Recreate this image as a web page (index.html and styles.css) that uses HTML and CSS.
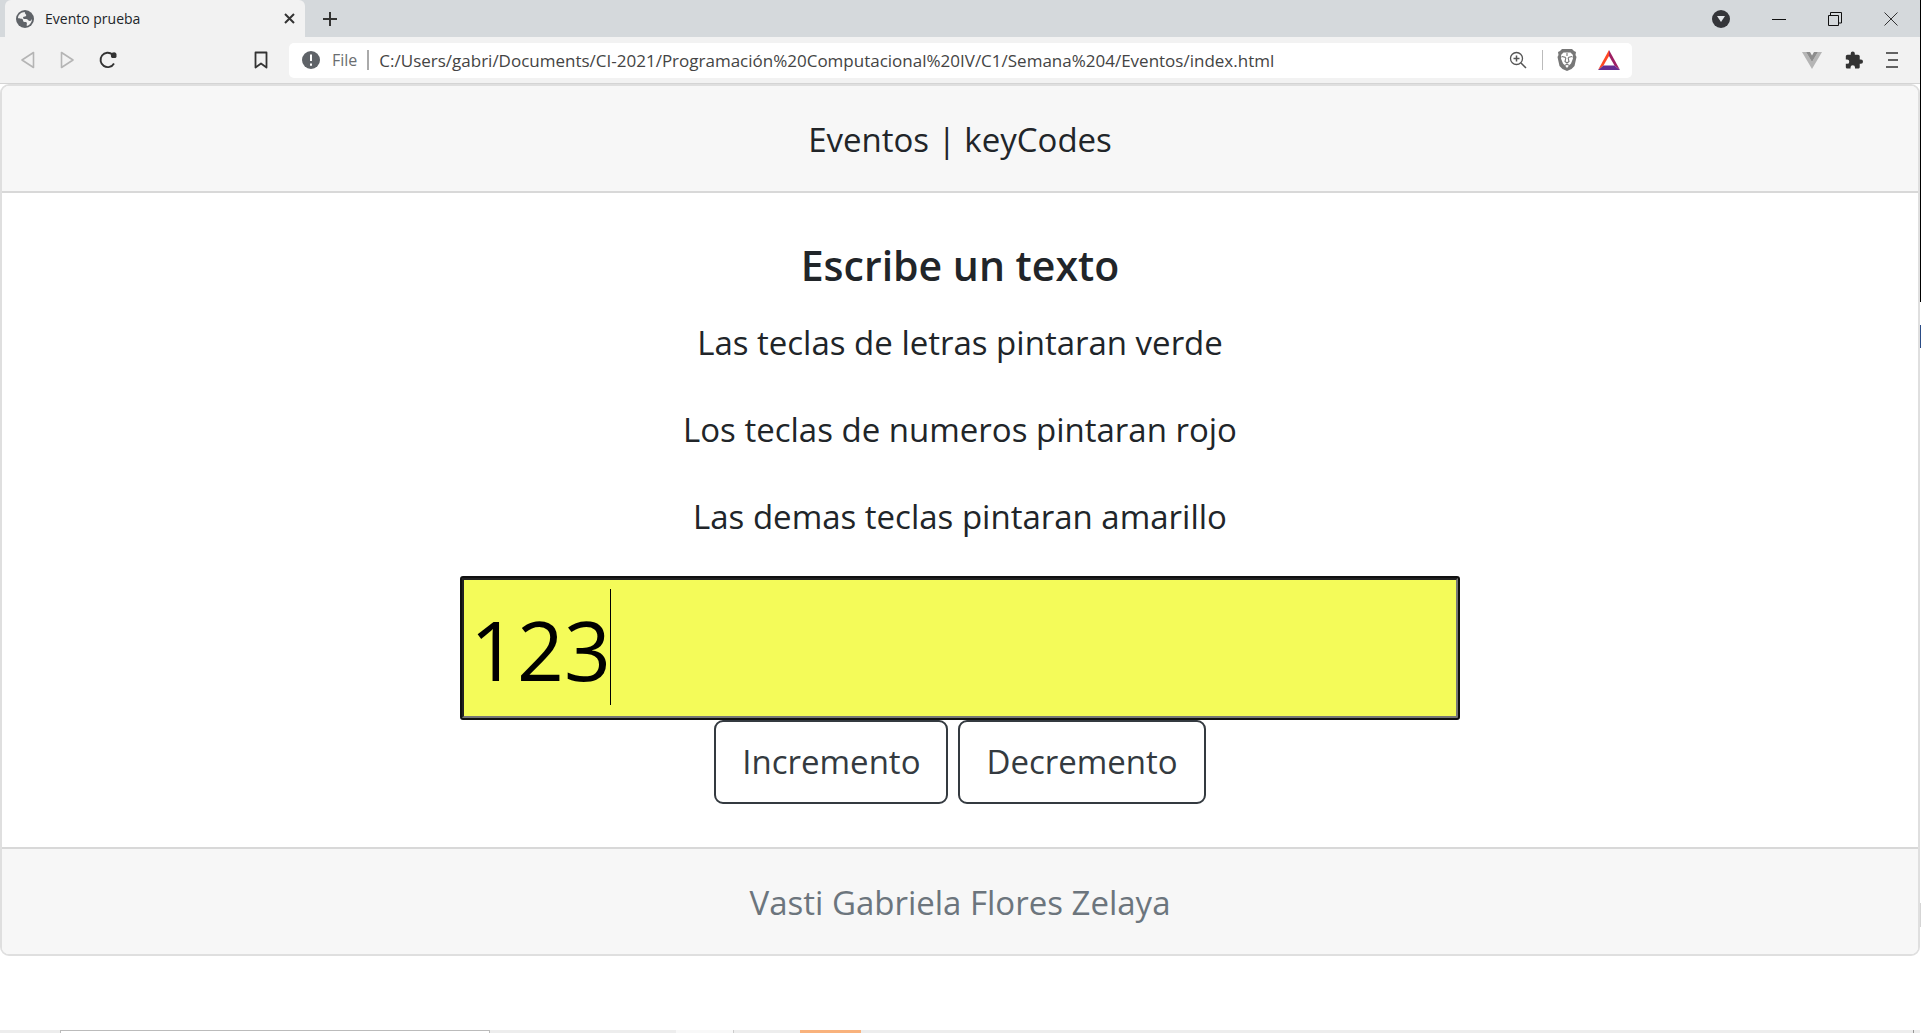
FILE: index.html
```html
<!DOCTYPE html>
<html lang="es">
<head>
<meta charset="utf-8">
<title>Evento prueba</title>
<link rel="stylesheet" href="styles.css">
</head>
<body>
<div class="window">
  <header class="tabs">
    <div class="tab">
      <svg class="icon" width="18" height="18" viewBox="0 0 18 18"><circle cx="9" cy="9" r="9" fill="#5f6368"/><path d="M9 2c-1 2 2 2 1 4-1 1-3 0-3 2 0 1 2 1 3 1 2 0 2 2 4 2 1 0 1-1 2-2 0 3-2 6-5 7-1-1 1-3-1-4-2 0-3 0-3-2S3 9 2 8c0-3 3-6 7-6z" fill="#f2f2f2"/></svg>
      <span class="tab-title">Evento prueba</span>
      <button class="icon-btn" aria-label="Cerrar pestaña"><svg width="11" height="11" viewBox="0 0 11 11"><path d="M1 1l9 9M10 1l-9 9" stroke="#333" stroke-width="2"/></svg></button>
    </div>
    <button class="icon-btn new-tab" aria-label="Nueva pestaña"><svg width="16" height="16" viewBox="0 0 16 16"><path d="M8 1v14M1 8h14" stroke="#333" stroke-width="2"/></svg></button>
    <div class="window-controls">
      <button class="icon-btn" aria-label="Buscar pestañas"><svg width="18" height="18" viewBox="0 0 18 18"><circle cx="9" cy="9" r="9" fill="#35363a"/><path d="M5 6h8l-4 6z" fill="#e4e7ea"/></svg></button>
      <button class="icon-btn" aria-label="Minimizar"><svg width="14" height="14" viewBox="0 0 14 14"><path d="M0 7.5h14" stroke="#111"/></svg></button>
      <button class="icon-btn" aria-label="Restaurar"><svg width="14" height="14" viewBox="0 0 14 14"><path d="M.5 3.500h10v10H.5zM2.500 3V.5h11v10.500H11" fill="none" stroke="#111"/></svg></button>
      <button class="icon-btn" aria-label="Cerrar"><svg width="14" height="14" viewBox="0 0 14 14"><path d="M.5.5l13 13M13.500.5l-13 13" stroke="#333"/></svg></button>
    </div>
  </header>
  <nav class="toolbar">
    <div class="nav-buttons">
      <button class="icon-btn" aria-label="Atrás"><svg width="14" height="18" viewBox="0 0 14 18"><path d="M12.500 1.500v15L1 9z" fill="none" stroke="#b5b5b5" stroke-width="1.600" stroke-linejoin="round"/></svg></button>
      <button class="icon-btn" aria-label="Adelante"><svg width="14" height="18" viewBox="0 0 14 18"><path d="M1.500 1.500v15L13 9z" fill="none" stroke="#b5b5b5" stroke-width="1.600" stroke-linejoin="round"/></svg></button>
      <button class="icon-btn" aria-label="Recargar"><svg width="18" height="18" viewBox="0 0 18 18"><path d="M15 12.500A7.200 7.200 0 1 1 13.500 3.500" fill="none" stroke="#333" stroke-width="1.900"/><path d="M12.500 2q4-2 5 1 .5 3-1 4h-3.500q-2-1.500-.5-5z" fill="#333"/></svg></button>
    </div>
    <button class="icon-btn bookmark" aria-label="Marcador"><svg width="14" height="18" viewBox="0 0 14 18"><path d="M1.500 1.500h11v15L7 12.500l-5.500 4z" fill="none" stroke="#333" stroke-width="1.800" stroke-linejoin="round"/></svg></button>
    <div class="address">
      <svg class="icon" width="18" height="18" viewBox="0 0 18 18"><circle cx="9" cy="9" r="9" fill="#5f6368"/><path d="M9 3.500v6.500M9 12.500v2.200" stroke="#fff" stroke-width="2"/></svg>
      <span class="scheme">File</span>
      <input class="url" aria-label="Dirección" value="C:/Users/gabri/Documents/CI-2021/Programación%20Computacional%20IV/C1/Semana%204/Eventos/index.html">
      <svg class="icon" width="18" height="18" viewBox="0 0 18 18"><circle cx="7.500" cy="7.500" r="6" fill="none" stroke="#555" stroke-width="1.300"/><path d="M12 12l5 5M4.500 7.500h6M7.500 4.500v6" stroke="#555" stroke-width="1.500"/></svg>
      <span class="divider"></span>
      <svg class="icon shield" width="20" height="22" viewBox="0 0 20 22"><path d="M5 0h10l2 2 2 1-.5 3 1 2-2 9-3 3-4.500 2L5.500 20l-3-3-2-9 1-2L1 3l2-1z" fill="#777"/><path d="M6.500 3.500h7L16 6l-.5 2 .5 1.500-2 5-1.500 1.500L10 19l-2.500-3L6 14.500l-2-5L4.500 8 4 6z" fill="#fff"/><path d="M5 7.500l3 .7.800 1-.8 3.300 2 1.500 2-1.500-.8-3.300.8-1 3-.7M7.500 16.500l2.500-1.200 2.500 1.200M10 4v3" fill="none" stroke="#777" stroke-width="1.100"/></svg>
      <svg class="icon" width="22" height="20" viewBox="0 0 22 20"><path d="M11 0v6L5.500 15.500 0 20z" fill="#ff4724"/><path d="M11 0l11 20-5.500-4.500L11 6z" fill="#9e1f63"/><path d="M0 20l5.500-4.500h11L22 20z" fill="#662d91"/></svg>
    </div>
    <div class="extensions">
      <button class="icon-btn" aria-label="Vue"><svg width="20" height="17" viewBox="0 0 20 17"><path d="M0 0h4l6 10 6-10h4L10 17z" fill="#b5b5b5"/><path d="M4 0h4l2 3.500L12 0h4l-6 10z" fill="#8d8d8d"/></svg></button>
      <button class="icon-btn" aria-label="Extensiones"><svg width="18" height="18" viewBox="1 1 22 21"><path d="M20.500 11H19V7c0-1.100-.9-2-2-2h-4V3.500a2.500 2.500 0 0 0-5 0V5H4c-1.100 0-2 .9-2 2v3.800h1.500a2.700 2.700 0 0 1 0 5.400H2V20c0 1.100.9 2 2 2h3.800v-1.500a2.700 2.700 0 0 1 5.400 0V22H17c1.100 0 2-.9 2-2v-4h1.500a2.500 2.500 0 0 0 0-5z" fill="#333"/></svg></button>
      <button class="icon-btn" aria-label="Menú"><svg width="12" height="16" viewBox="0 0 12 16"><path d="M0 1h12M2 8h10M0 15h12" stroke="#333" stroke-width="1.600"/></svg></button>
    </div>
  </nav>
  <main class="page">
    <section class="card">
      <div class="card-header">Eventos | keyCodes</div>
      <div class="card-body">
        <h1 class="card-title">Escribe un texto</h1>
        <p>Las teclas de letras pintaran verde</p>
        <p>Los teclas de numeros pintaran rojo</p>
        <p>Las demas teclas pintaran amarillo</p>
        <div class="field"><input class="key-input" aria-label="Texto" value="123"><span class="caret"></span></div>
        <div class="actions"><button class="btn">Incremento</button><button class="btn">Decremento</button></div>
      </div>
      <div class="card-footer">Vasti Gabriela Flores Zelaya</div>
    </section>
  </main>
  <footer class="taskbar"><span class="search-edge"></span><span class="task-light"></span><span class="task-active"></span><span class="task-end"></span></footer>
</div>
<aside class="side"><span class="side-dark"></span><span class="side-blue"></span><span class="side-gray"></span></aside>
</body>
</html>
```
FILE: styles.css
```css
* { box-sizing: border-box; }
body {
  margin: 0;
  min-height: 100vh;
  display: grid;
  grid-template-columns: 1fr 1px;
  background: #fff;
  color: #212529;
  font-family: "Open Sans", "Noto Sans", sans-serif;
}
.window { display: flex; flex-direction: column; min-width: 0; }
.icon-btn { display: flex; padding: 0; border: 0; background: none; }
.icon { flex: none; }

.tabs { display: flex; align-items: center; height: 37px; padding-left: 5px; background: #d5d9dc; }
.tab {
  display: flex; align-items: center; gap: 11px;
  width: 300px; height: 37px; padding: 0 10px 0 11px;
  background: #f2f2f2; border-radius: 6px 6px 0 0;
}
.tab-title { flex: 1; font-size: 14px; }
.new-tab { margin-left: 17px; }
.window-controls { display: flex; align-items: center; gap: 42px; margin-left: auto; padding-right: 22px; }

.toolbar { display: flex; align-items: center; height: 47px; background: #f2f2f2; border-bottom: 1px solid #d4d4d4; }
.nav-buttons { display: flex; gap: 25px; padding-left: 21px; }
.bookmark { margin-left: 137px; }
.address {
  display: flex; align-items: center; flex: 1;
  height: 35px; margin-left: 21px; padding: 0 12px 0 13px;
  background: #fff; border-radius: 5px;
}
.scheme { margin: 0 10px 0 12px; padding-right: 10px; border-right: 2px solid #aaa; font-size: 16px; line-height: 20px; color: #6a6d70; }
.url { flex: 1; min-width: 0; padding: 0; border: 0; background: none; font: 17px "Open Sans", "Noto Sans", sans-serif; color: #444; }
.divider { width: 1px; height: 20px; margin: 0 14px 0 15px; background: #bbb; }
.shield { margin-right: 21px; }
.extensions { display: flex; align-items: center; justify-content: flex-end; gap: 23px; width: 288px; padding-right: 22px; }

.page { flex: 1; font-size: 33px; line-height: 52px; text-align: center; }
.card { border: 2px solid #dfdfdf; border-radius: 9px; overflow: hidden; }
.card-header { padding: 28px 36px 25px; background: #f7f7f7; border-bottom: 2px solid #d8d8d8; }
.card-body { padding: 46px 36px 43px; }
.card-title { margin: 0 0 26px; font-size: 41px; line-height: 52px; font-weight: 600; }
.card-body p { margin: 0 0 35px; }
.field { position: relative; width: 54%; margin: 0 auto; }
.key-input {
  display: block; width: 100%; height: 140px; padding: 2px 6px 0;
  border: 2px inset #767676; background: #f4fb59;
  outline: 2px solid #101010; border-radius: 1px;
  font: 82px "Open Sans", "Noto Sans", sans-serif; color: #000;
}
.caret { position: absolute; left: 148px; top: 11px; width: 1px; height: 116px; background: #000; }
.actions { display: flex; justify-content: center; gap: 10px; padding-top: 2px; }
.btn {
  padding: 14px 26px; border: 2px solid #343a40; border-radius: 9px;
  background: #fff; color: #343a40; font: inherit;
}
.card-footer { padding: 28px 36px 25px; background: #f7f7f7; border-top: 2px solid #d8d8d8; color: #6c757d; }

.taskbar { display: flex; height: 3px; padding-left: 60px; background: #ededed; }
.search-edge { width: 430px; background: #fff; border: 1px solid #bbb; border-bottom: 0; }
.task-light { width: 58px; margin-left: 186px; background: #f8f8f8; border-right: 1px solid #ccc; }
.task-active { width: 61px; margin-left: 66px; background: #f9b27c; }
.task-end { width: 1px; margin: 0 6px 0 auto; background: #999; }

.side { display: flex; flex-direction: column; background: #fff; }
.side-dark { height: 302px; background: #000; }
.side-blue { height: 23px; margin-top: 23px; background: #2b4c86; }
.side-gray { height: 24px; margin-top: 555px; background: #d5d5d5; }
```
